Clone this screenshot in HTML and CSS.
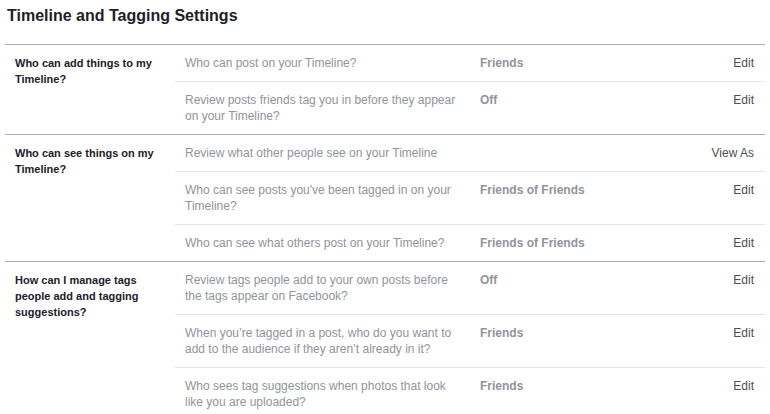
FILE: index.html
```html
<!DOCTYPE html>
<html>
<head>
<meta charset="utf-8">
<link rel="stylesheet" href="styles.css">
</head>
<body>
<div class="page">
  <h1 class="title">Timeline and Tagging Settings</h1>
  <div class="settings">
    <section class="section">
      <div class="label">Who can add things to my Timeline?</div>
      <div class="rows">
        <div class="row">
          <div class="question">Who can post on your Timeline?</div>
          <div class="value">Friends</div>
          <div class="action">Edit</div>
        </div>
        <div class="row">
          <div class="question">Review posts friends tag you in before they appear on your Timeline?</div>
          <div class="value">Off</div>
          <div class="action">Edit</div>
        </div>
      </div>
    </section>
    <section class="section">
      <div class="label">Who can see things on my Timeline?</div>
      <div class="rows">
        <div class="row">
          <div class="question">Review what other people see on your Timeline</div>
          <div class="value"></div>
          <div class="action">View As</div>
        </div>
        <div class="row">
          <div class="question">Who can see posts you've been tagged in on your Timeline?</div>
          <div class="value">Friends of Friends</div>
          <div class="action">Edit</div>
        </div>
        <div class="row">
          <div class="question">Who can see what others post on your Timeline?</div>
          <div class="value">Friends of Friends</div>
          <div class="action">Edit</div>
        </div>
      </div>
    </section>
    <section class="section">
      <div class="label">How can I manage tags people add and tagging suggestions?</div>
      <div class="rows">
        <div class="row">
          <div class="question">Review tags people add to your own posts before the tags appear on Facebook?</div>
          <div class="value">Off</div>
          <div class="action">Edit</div>
        </div>
        <div class="row">
          <div class="question">When you’re tagged in a post, who do you want to add to the audience if they aren’t already in it?</div>
          <div class="value">Friends</div>
          <div class="action">Edit</div>
        </div>
        <div class="row">
          <div class="question">Who sees tag suggestions when photos that look like you are uploaded?</div>
          <div class="value">Friends</div>
          <div class="action">Edit</div>
        </div>
      </div>
    </section>
  </div>
</div>
</body>
</html>
```
FILE: styles.css
```css
html, body {
  margin: 0;
  padding: 0;
  background: #ffffff;
}
body {
  font-family: "Liberation Sans", Arial, sans-serif;
  font-size: 12px;
  line-height: 16px;
  color: #1d2129;
}
.page {
  padding: 0 5px 0 5px;
  width: 760px;
}
.title {
  margin: 0;
  padding: 6px 0 0 2px;
  height: 38px;
  font-size: 16px;
  line-height: 20px;
  font-weight: bold;
  color: #1d2129;
}
.settings {
  display: flex;
  flex-direction: column;
}
.section {
  display: grid;
  grid-template-columns: 170px 1fr;
  border-top: 1px solid #aeaeae;
}
.label {
  padding: 10px 10px 10px 10px;
  font-size: 11px;
  font-weight: bold;
  color: #1d2129;
}
.rows {
  display: flex;
  flex-direction: column;
}
.row {
  display: grid;
  grid-template-columns: 285px 1fr auto;
  column-gap: 10px;
  padding: 10px 11px 10px 10px;
}
.row + .row {
  border-top: 1px solid #e5e5e5;
}
.question {
  padding-right: 10px;
  color: #90949c;
}
.value {
  color: #90949c;
  font-weight: bold;
}
.action {
  color: #4b4f56;
  text-align: right;
}
```
